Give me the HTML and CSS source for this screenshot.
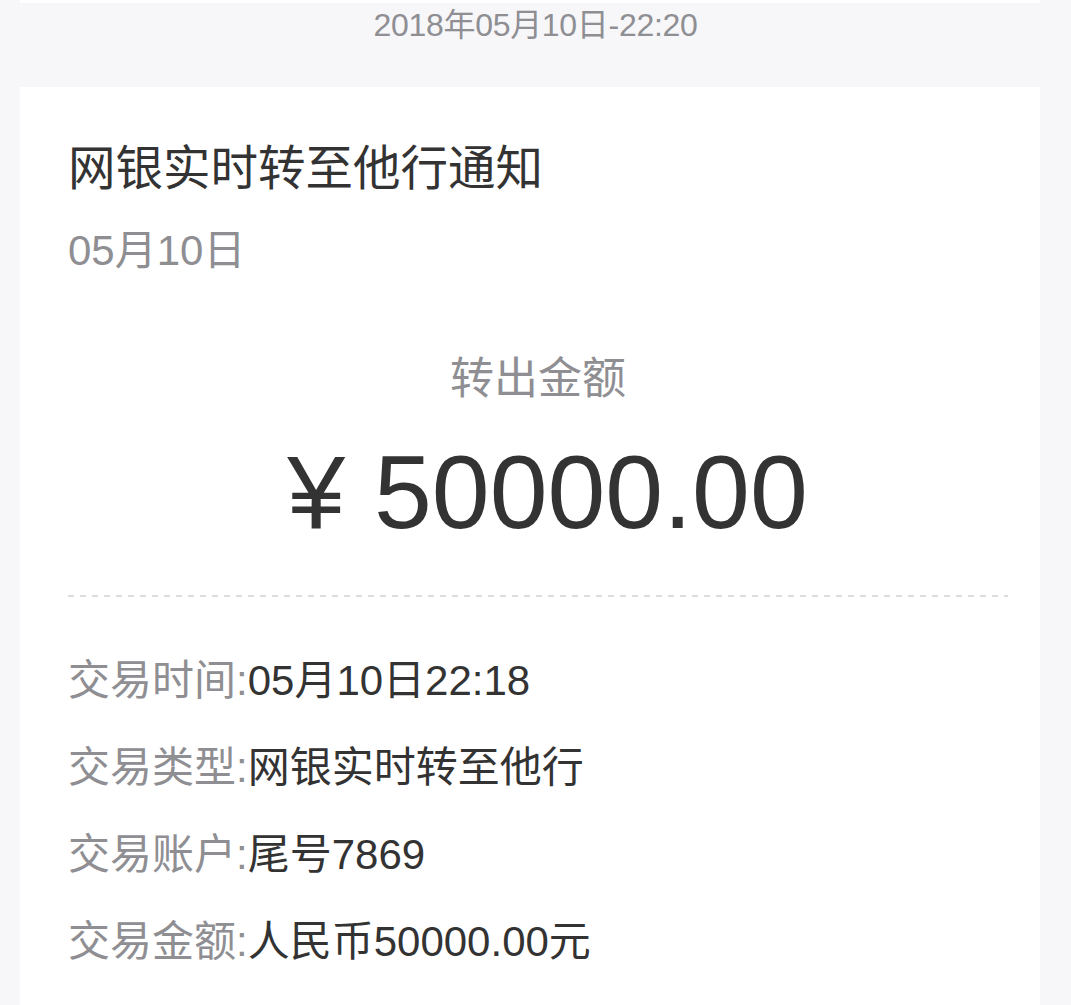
FILE: index.html
```html
<!DOCTYPE html>
<html lang="zh-CN">
<head>
  <meta charset="UTF-8">
  <meta name="viewport" content="width=device-width, initial-scale=1.0">
  <title>网银实时转至他行通知</title>
  <link rel="stylesheet" href="styles.css">
</head>
<body>
  <div class="card-tail"></div>
  <div class="msg-time">2018年05月10日-22:20</div>

  <div class="card">
    <h1 class="card-title">网银实时转至他行通知</h1>
    <div class="card-date">05月10日</div>

    <div class="amount-label">转出金额</div>
    <div class="amount">¥ 50000.00</div>

    <div class="divider"></div>

    <div class="details">
      <div class="row"><span class="key">交易时间:</span><span class="val">05月10日22:18</span></div>
      <div class="row"><span class="key">交易类型:</span><span class="val">网银实时转至他行</span></div>
      <div class="row"><span class="key">交易账户:</span><span class="val">尾号7869</span></div>
      <div class="row"><span class="key">交易金额:</span><span class="val">人民币50000.00元</span></div>
      <div class="row"><span class="key">交易余额:</span><span class="val">人民币0.00元</span></div>
    </div>
  </div>
</body>
</html>
```

FILE: styles.css
```css
body {
  margin: 0;
  background: #f7f7f9;
  font-family: "Liberation Sans", "Noto Sans CJK SC", sans-serif;
  color: #333;
  overflow: hidden;
}
.card-tail {
  height: 3px;
  width: 1020px;
  margin-left: 20px;
  background: #fff;
}
.msg-time {
  margin-top: 2px;
  text-align: center;
  font-size: 32px;
  line-height: 40px;
  color: #8e8e93;
  letter-spacing: -0.3px;
}
.card {
  width: 1020px;
  margin: 42px 0 0 20px;
  padding: 52px 32px 0 48px;
  box-sizing: border-box;
  background: #fff;
}
.card-title {
  margin: 0;
  font-size: 47.5px;
  font-weight: normal;
  line-height: 60px;
  color: #333;
}
.card-date {
  margin-top: 24px;
  font-size: 42px;
  line-height: 56px;
  color: #8e8e93;
}
.amount-label {
  margin-top: 72px;
  text-align: center;
  font-size: 44px;
  line-height: 56px;
  color: #8e8e93;
}
.amount {
  margin-top: 25px;
  text-align: center;
  font-size: 104px;
  line-height: 120px;
  color: #333;
  padding-left: 19px;
}
.divider {
  margin-top: 43px;
  height: 2px;
  background-image: linear-gradient(to right, #dcdcdc 6px, transparent 6px);
  background-size: 12px 2px;
  background-repeat: repeat-x;
}
.details {
  margin-top: 40px;
}
.row {
  font-size: 42px;
  line-height: 87px;
  white-space: nowrap;
}
.key {
  color: #8e8e93;
}
.val {
  color: #333;
}
```
